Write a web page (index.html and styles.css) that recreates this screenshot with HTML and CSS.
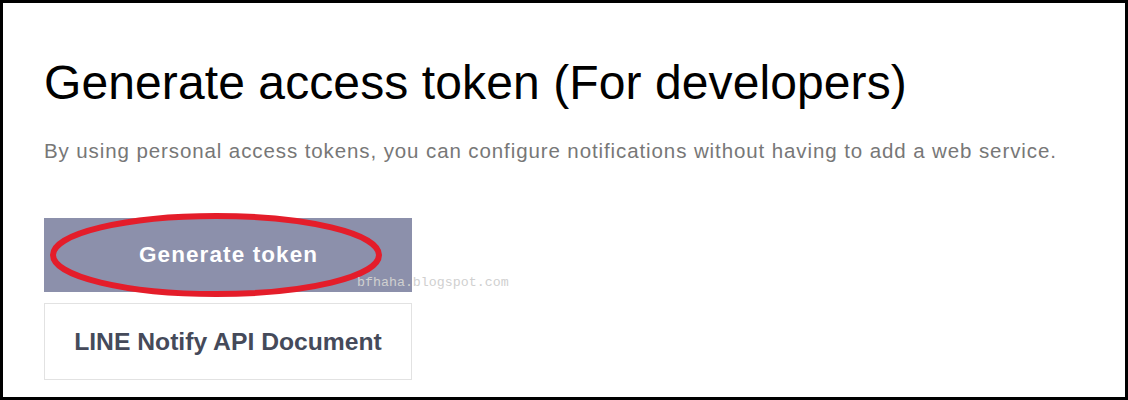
FILE: index.html
```html
<!DOCTYPE html>
<html lang="en">
<head>
<meta charset="utf-8">
<link rel="stylesheet" href="styles.css">
</head>
<body>
<div class="frame">
  <h1 class="title">Generate access token (For developers)</h1>
  <p class="desc">By using personal access tokens, you can configure notifications without having to add a web service.</p>
  <div class="actions">
    <div class="btn-wrap">
      <button class="btn btn-primary">Generate token</button>
      <svg class="mark" width="340" height="92" viewBox="0 0 340 92"><ellipse cx="167" cy="45" rx="163" ry="39" fill="none" stroke="#e41d2a" stroke-width="6"/></svg>
      <span class="watermark">bfhaha.blogspot.com</span>
    </div>
    <button class="btn btn-secondary">LINE Notify API Document</button>
  </div>
</div>
</body>
</html>
```
FILE: styles.css
```css
html, body {
  margin: 0;
  padding: 0;
  background: #fff;
}
.frame {
  box-sizing: border-box;
  width: 1128px;
  height: 400px;
  border: 3px solid #000;
  padding: 52px 0 0 41px;
  font-family: "Liberation Sans", Arial, sans-serif;
  overflow: hidden;
}
.title {
  margin: 0;
  font-size: 48px;
  line-height: 56px;
  font-weight: normal;
  color: #000;
  letter-spacing: 0.1px;
}
.desc {
  margin: 28px 0 0;
  font-size: 20.5px;
  line-height: 24px;
  letter-spacing: 0.9px;
  color: #777;
  white-space: nowrap;
}
.actions {
  margin-top: 55px;
  display: flex;
  flex-direction: column;
  gap: 11px;
  width: 368px;
}
.btn-wrap {
  position: relative;
}
.btn {
  display: block;
  box-sizing: border-box;
  width: 368px;
  margin: 0;
  padding: 0;
  font-family: "Liberation Sans", Arial, sans-serif;
  font-weight: bold;
  cursor: pointer;
}
.btn-primary {
  height: 74px;
  border: none;
  background: #8c90ab;
  color: #fff;
  font-size: 22.5px;
  letter-spacing: 1.1px;
  text-indent: 1.1px;
}
.btn-secondary {
  height: 77px;
  border: 1px solid #e2e2e2;
  background: #fff;
  color: #454a5a;
  font-size: 24.7px;
}
.mark {
  position: absolute;
  left: 5px;
  top: -8px;
}
.watermark {
  position: absolute;
  left: 313px;
  top: 57px;
  font-family: "Liberation Mono", "Courier New", monospace;
  font-size: 13.3px;
  color: #d0d0d0;
  white-space: nowrap;
}
```
